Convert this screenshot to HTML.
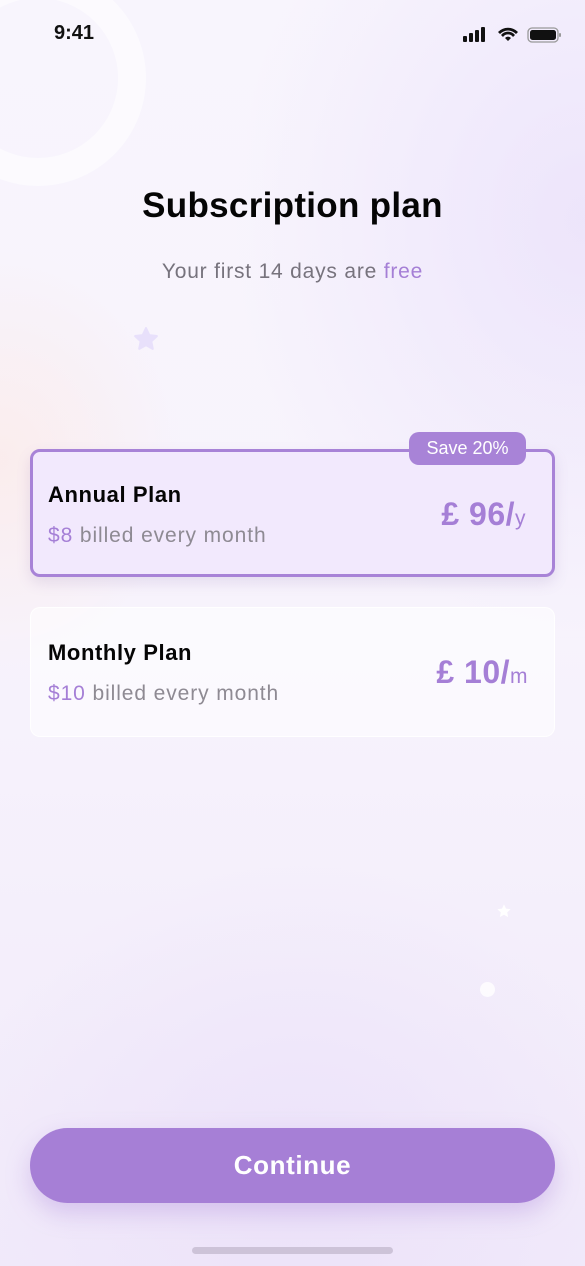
<!DOCTYPE html>
<html><head><meta charset="utf-8"><style>
*{margin:0;padding:0;box-sizing:border-box}
body{width:585px;height:1266px;overflow:hidden;font-family:"Liberation Sans",sans-serif;position:relative;
background:
radial-gradient(ellipse 260px 300px at 0px 460px,rgba(255,228,218,0.45),transparent 70%),
radial-gradient(ellipse 500px 600px at 585px 220px,rgba(232,222,250,0.7),transparent 70%),
radial-gradient(ellipse 500px 450px at 300px 1180px,rgba(232,220,248,0.6),transparent 70%),
linear-gradient(180deg,#f8f5fd 0%,#f7f3fc 50%,#f1eafa 100%);}
.abs{position:absolute}
.ring{border-radius:50%;border:28px solid rgba(255,255,255,0.5);width:216px;height:216px;left:-70px;top:-30px}
.time{left:54px;top:22px;font-size:20px;font-weight:bold;color:#111}
h1{position:absolute;left:0;right:0;top:186px;text-align:center;font-size:35px;font-weight:bold;color:#050505;letter-spacing:0.3px}
.sub{left:0;right:0;top:260px;text-align:center;font-size:21px;color:#77737d;letter-spacing:0.8px}
.p{color:#a57fd6}
.card{left:30px;width:525px;border-radius:10px}
.a{top:449px;height:128px;background:#f2e9fd;border:3px solid #a883d7;box-shadow:0 6px 14px rgba(120,90,160,0.15)}
.m{top:607px;height:130px;background:rgba(255,255,255,0.55);border:1.5px solid rgba(255,255,255,0.9)}
.t{position:absolute;left:15px;font-size:22px;font-weight:bold;color:#050505;letter-spacing:0.6px}
.s{position:absolute;left:15px;font-size:21px;color:#8e8a93;letter-spacing:0.9px}
.m .t,.m .s{left:17px}
.pr{position:absolute;right:26px;font-size:32px;font-weight:bold;color:#a57fd6;letter-spacing:0.5px}
.pr small{font-size:21px;font-weight:normal}
.badge{left:409px;top:432px;width:117px;height:33px;border-radius:10px;background:#a883d7;color:#fff;font-size:18px;text-align:center;line-height:33px}
.btn{left:30px;top:1128px;width:525px;height:75px;border-radius:38px;background:#a67fd6;color:#fff;font-size:26px;font-weight:bold;text-align:center;line-height:75px;letter-spacing:0.6px;box-shadow:0 10px 24px rgba(166,127,214,0.35)}
.home{left:192px;top:1247px;width:201px;height:7px;border-radius:4px;background:#cdc3d8}
</style></head><body>
<div class="abs ring"></div>
<div class="abs time">9:41</div>
<svg class="abs" style="left:462px;top:26px" width="100" height="18" viewBox="0 0 100 18">
<rect x="1" y="10" width="4" height="6" rx="1" fill="#111"/><rect x="7" y="7" width="4" height="9" rx="1" fill="#111"/><rect x="13" y="4" width="4" height="12" rx="1" fill="#111"/><rect x="19" y="1" width="4" height="15" rx="1" fill="#111"/>
<path d="M36 6a14 14 0 0 1 20 0l-2 2a11 11 0 0 0-16 0z M39 9a9 9 0 0 1 14 0l-2 2a6 6 0 0 0-10 0z M43 12a4 4 0 0 1 6 0l-3 3z" fill="#111"/>
<rect x="66" y="2" width="30" height="14" rx="4" fill="none" stroke="#999" stroke-width="1.3"/><rect x="68" y="4" width="26" height="10" rx="2.5" fill="#111"/><rect x="97" y="7" width="2" height="4" rx="1" fill="#999"/>
</svg>
<h1>Subscription plan</h1>
<div class="abs sub">Your first 14 days are <span class="p">free</span></div>
<svg class="abs" style="left:132px;top:326px" width="28" height="26" viewBox="0 0 24 24"><path d="M12 2l3 6.5 7 .8-5.2 4.8 1.4 7L12 17.6 5.8 21l1.4-7L2 9.3l7-.8z" fill="#e8e0fb" stroke="#e8e0fb" stroke-linejoin="round" stroke-width="2"/></svg>
<div class="abs card a"><div class="t" style="top:30px">Annual Plan</div><div class="s" style="top:72px"><span class="p">$8</span> billed every month</div><div class="pr" style="top:44px">£ 96/<small>y</small></div></div>
<div class="abs badge">Save 20%</div>
<div class="abs card m"><div class="t" style="top:32px">Monthly Plan</div><div class="s" style="top:74px"><span class="p">$10</span> billed every month</div><div class="pr" style="top:46px">£ 10/<small>m</small></div></div>
<svg class="abs" style="left:496px;top:903px" width="16" height="16" viewBox="0 0 24 24"><path d="M12 2l3 6.5 7 .8-5.2 4.8 1.4 7L12 17.6 5.8 21l1.4-7L2 9.3l7-.8z" fill="#fff"/></svg>
<div class="abs" style="left:480px;top:982px;width:15px;height:15px;border-radius:50%;background:rgba(255,255,255,0.8)"></div>
<div class="abs btn">Continue</div>
<div class="abs home"></div>
</body></html>
